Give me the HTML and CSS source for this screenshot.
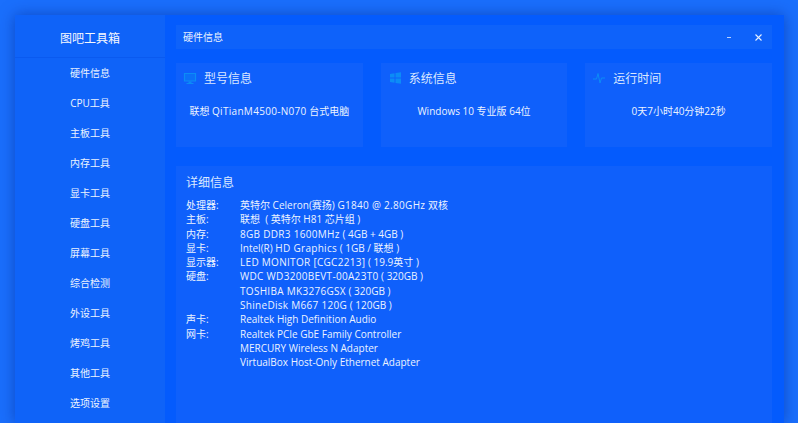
FILE: index.html
```html
<!DOCTYPE html>
<html lang="zh-CN">
<head>
<meta charset="utf-8">
<title>图吧工具箱</title>
<link rel="stylesheet" href="styles.css">
</head>
<body>
<div class="window">
  <aside class="sidebar">
    <div class="brand">图吧工具箱</div>
    <nav class="nav">
      <a>硬件信息</a><a>CPU工具</a><a>主板工具</a><a>内存工具</a><a>显卡工具</a><a>硬盘工具</a><a>屏幕工具</a><a>综合检测</a><a>外设工具</a><a>烤鸡工具</a><a>其他工具</a><a>选项设置</a>
    </nav>
  </aside>
  <main class="main">
    <header class="titlebar">
      <span class="title">硬件信息</span>
      <span class="controls"><span class="min"></span><svg class="close" width="7" height="7" viewBox="0 0 7 7"><path d="M.5.5l6 6M6.5.5l-6 6" stroke="#e6f0ff" stroke-width="1.1" fill="none"/></svg></span>
    </header>
    <section class="cards">
      <div class="card">
        <div class="card-head">
          <svg class="icon" width="14" height="14" viewBox="0 0 14 14"><path d="M1.500 2.500h11v7.500h-11z" fill="#0c70f8" stroke="#0c8cf6" stroke-width="1.200"/><path d="M5.500 10.500h3V12h-3zM3.500 12h7v1h-7z" fill="#0c8cf6"/></svg>
          <span>型号信息</span>
        </div>
        <p class="card-body">联想 <span class="caps">QiTianM4500-N070</span> 台式电脑</p>
      </div>
      <div class="card">
        <div class="card-head">
          <svg class="icon" width="14" height="14" viewBox="0 0 14 14"><path d="M2 3l4.500-.7v4.200H2zM7.500 2.100L13 1.200v5.300H7.500zM2 7.500h4.500v4.200L2 11zM7.500 7.500H13v5.300l-5.500-.9z" fill="#0c8cf6"/></svg>
          <span>系统信息</span>
        </div>
        <p class="card-body">Windows 10 专业版 64位</p>
      </div>
      <div class="card">
        <div class="card-head">
          <svg class="icon" width="14" height="14" viewBox="0 0 14 14"><path d="M1 8h3.500L6 2.500 8 12l1.500-5H13" fill="none" stroke="#0c8cf6" stroke-width="1"/></svg>
          <span>运行时间</span>
        </div>
        <p class="card-body">0天7小时40分钟22秒</p>
      </div>
    </section>
    <section class="detail">
      <h2>详细信息</h2>
      <dl class="specs">
        <dt>处理器:</dt><dd>英特尔 Celeron(赛扬) <span class="caps">G1840 @ 2.80GHz</span> 双核</dd>
        <dt>主板:</dt><dd>联想 &nbsp;( 英特尔 H81 芯片组 )</dd>
        <dt>内存:</dt><dd><span class="caps">8GB DDR3 1600MHz</span> ( 4GB + 4GB )</dd>
        <dt>显卡:</dt><dd>Intel(R) <span class="caps">HD Graphics</span> ( 1GB / 联想 )</dd>
        <dt>显示器:</dt><dd><span class="caps">LED MONITOR [CGC2213]</span> ( 19.9英寸 )</dd>
        <dt>硬盘:</dt><dd><span class="caps">WDC WD3200BEVT-00A23T0</span> ( 320GB )<br><span class="caps">TOSHIBA MK3276GSX</span> ( 320GB )<br><span class="caps">ShineDisk M667 120G</span> ( 120GB )</dd>
        <dt>声卡:</dt><dd>Realtek High Definition Audio</dd>
        <dt>网卡:</dt><dd>Realtek PCIe GbE Family Controller<br>MERCURY Wireless N Adapter<br>VirtualBox Host-Only Ethernet Adapter</dd>
      </dl>
    </section>
  </main>
</div>
</body>
</html>
```

FILE: styles.css
```css
* { box-sizing: border-box; }
html, body { margin: 0; height: 100%; overflow: hidden; }
body {
  background: #1a6ffc;
  padding: 15px 14px 0 15px;
  font-family: "Open Sans", "Noto Sans CJK SC", sans-serif;
  font-size: 10px;
  color: #ecf3ff;
}
.window {
  display: flex;
  height: 408px;
  background: #045bfd;
  box-shadow: 0 0 14px rgba(0, 40, 150, .55);
}
.sidebar {
  width: 150px;
  flex: none;
  background: #0f63f8;
}
.brand {
  height: 43px;
  padding-top: 3px;
  display: flex;
  align-items: center;
  justify-content: center;
  font-size: 12px;
  color: #f5f8ff;
  border-bottom: 1px solid #0a5af0;
}
.nav { display: flex; flex-direction: column; align-items: center; }
.nav a { height: 30px; line-height: 30px; }
.main {
  flex: 1;
  min-width: 0;
  padding: 10px 12px 0 11px;
  display: flex;
  flex-direction: column;
}
.titlebar {
  height: 24px;
  flex: none;
  display: flex;
  align-items: center;
  justify-content: space-between;
  padding: 0 10px 0 7px;
  background: #0e62fa;
}
.title { line-height: 24px; }
.controls { display: flex; align-items: center; gap: 24px; }
.min { width: 4px; height: 1px; background: #b9d2ff; }
.close { display: block; }
.cards {
  display: grid;
  grid-template-columns: repeat(3, 1fr);
  gap: 18px;
  margin-top: 14px;
  flex: none;
}
.card {
  height: 84px;
  background: #0f60fb;
  padding: 7px 7px;
}
.card-head {
  display: flex;
  align-items: center;
  gap: 7px;
  height: 16px;
  font-size: 12px;
  color: #dbe8ff;
}
.icon { flex: none; }
.card-body {
  margin: 17px 0 0;
  text-align: center;
  line-height: 16px;
}
.caps { letter-spacing: .3px; }
.detail {
  flex: 1;
  margin-top: 19px;
  background: #0f60fb;
  padding: 8px 10px;
}
.detail h2 {
  margin: 0 0 7px;
  font-size: 12px;
  font-weight: 400;
  line-height: 17px;
  color: #dbe8ff;
}
.specs {
  margin: 0;
  display: grid;
  grid-template-columns: 54px 1fr;
  line-height: 14.300px;
}
.specs dt, .specs dd { margin: 0; }
```
